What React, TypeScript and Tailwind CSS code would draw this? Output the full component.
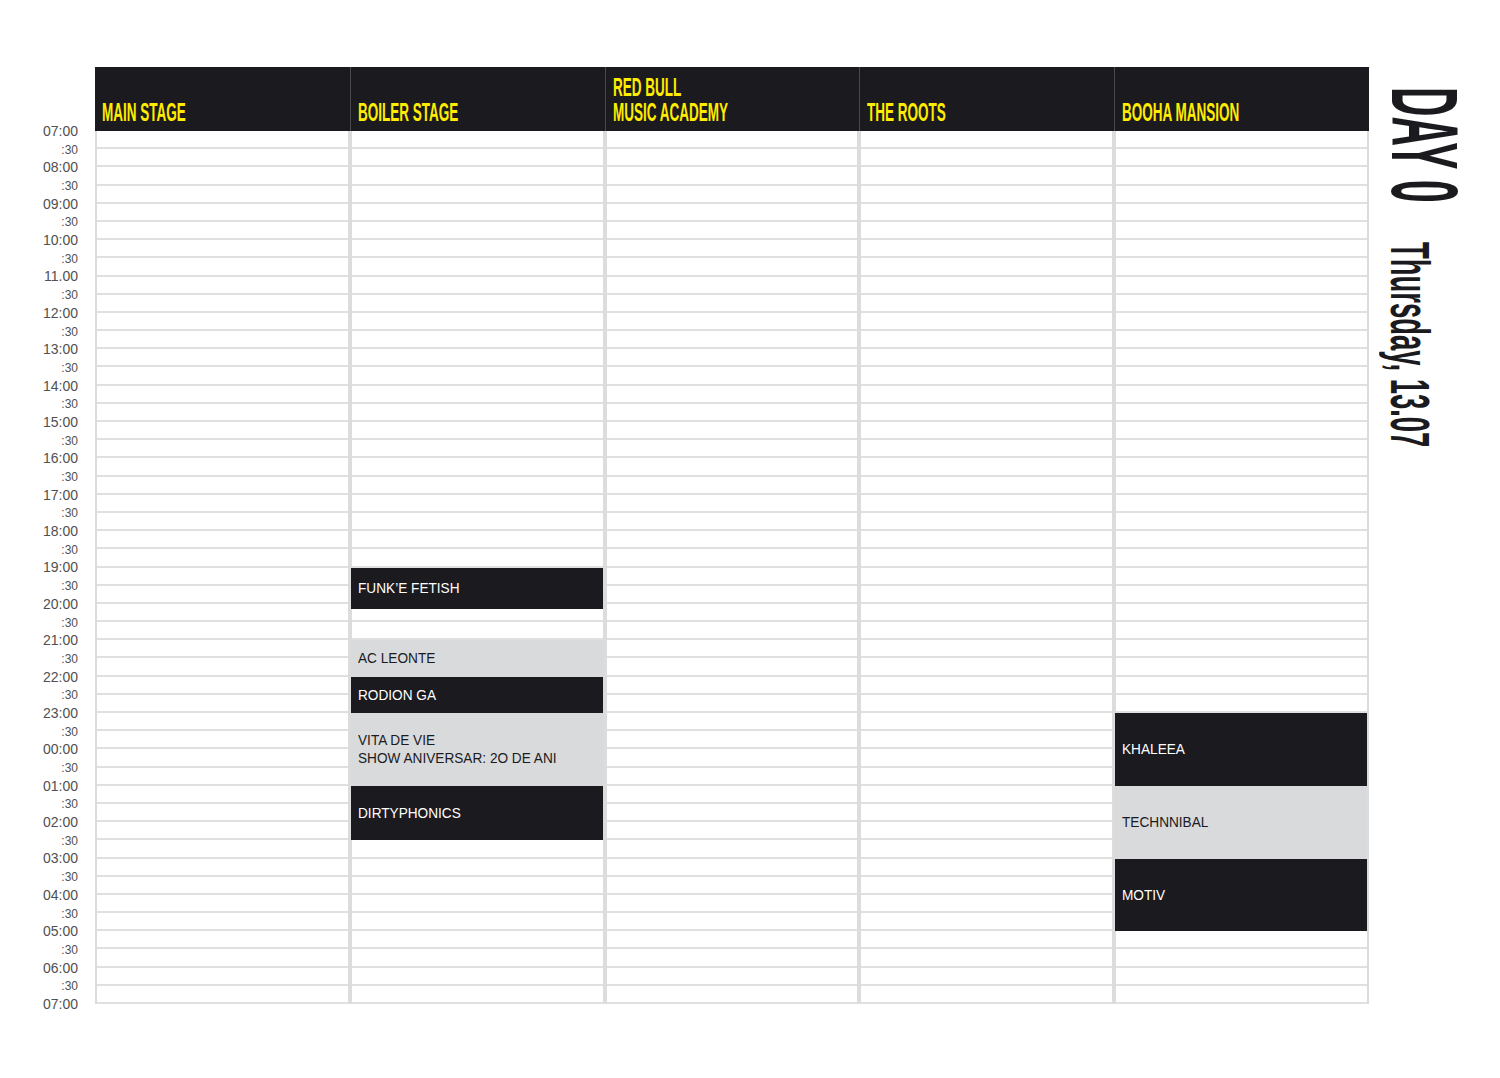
import React from 'react';

type Slot = { name: string[]; from: number; to: number; dark: boolean };

const ROW = 18.1875;

const stages: { title: string[]; slots: Slot[] }[] = [
  { title: ['MAIN STAGE'], slots: [] },
  {
    title: ['BOILER STAGE'],
    slots: [
      { name: ['FUNK’E FETISH'], from: 24, to: 26.3, dark: true },
      { name: ['AC LEONTE'], from: 28, to: 30, dark: false },
      { name: ['RODION GA'], from: 30, to: 32, dark: true },
      { name: ['VITA DE VIE', 'SHOW ANIVERSAR: 2O DE ANI'], from: 32, to: 36, dark: false },
      { name: ['DIRTYPHONICS'], from: 36, to: 39, dark: true },
    ],
  },
  { title: ['RED BULL', 'MUSIC ACADEMY'], slots: [] },
  { title: ['THE ROOTS'], slots: [] },
  {
    title: ['BOOHA MANSION'],
    slots: [
      { name: ['KHALEEA'], from: 32, to: 36, dark: true },
      { name: ['TECHNNIBAL'], from: 36, to: 40, dark: false },
      { name: ['MOTIV'], from: 40, to: 44, dark: true },
    ],
  },
];

const times: string[] = [];
for (let i = 0; i <= 48; i++) {
  const h = (7 + Math.floor(i / 2)) % 24;
  times.push(i % 2 ? ':30' : `${String(h).padStart(2, '0')}:00`);
}
// the print uses a dot for 11 o'clock
times[8] = '11.00';

export default function App() {
  return (
    <div className="w-[1500px] h-[1078px] bg-white flex pt-[67px] font-['Liberation_Sans',Arial,sans-serif]">
      <div className="w-[95px] shrink-0 flex flex-col pt-[55.4px] pr-[17px]">
        {times.map((t, i) => (
          <div
            key={i}
            className={`h-[18.1875px] flex items-center justify-end text-[#505050] ${i % 2 ? 'text-[12px]' : 'text-[14px]'}`}
          >
            {t}
          </div>
        ))}
      </div>

      <div className="w-[1274px] shrink-0 flex">
        {stages.map((s, ci) => (
          <div key={ci} className="flex-1 flex flex-col">
            <div className={`h-[64px] bg-[#1b1a1e] flex items-end pl-[7px] pb-[6px] ${ci ? 'border-l border-[#4a494d]' : ''}`}>
              <div className="origin-bottom-left scale-x-[0.54] whitespace-nowrap font-bold text-[25px] leading-[25px] text-[#ffec00]">
                {s.title.map((l) => (
                  <div key={l}>{l}</div>
                ))}
              </div>
            </div>
            <div className="relative h-[873px] grid grid-rows-[repeat(48,minmax(0,1fr))] border-l-2 border-[#dcdcdc] last:border-r-2">
              {Array.from({ length: 48 }).map((_, r) => (
                <div key={r} className="border-b-2 border-[#e0e0e0]" />
              ))}
              {s.slots.map((e) => (
                <div
                  key={e.name[0]}
                  className={`absolute -left-[1px] right-0 flex items-center pl-[7px] ${e.dark ? 'bg-[#1b1a1e] text-white' : 'bg-[#d9dadc] text-[#1b1a1e]'}`}
                  style={{ top: e.from * ROW, height: (e.to - e.from) * ROW }}
                >
                  <div className="origin-left scale-x-[0.88] whitespace-nowrap text-[15.5px] leading-[18px]">
                    {e.name.map((l) => (
                      <div key={l}>{l}</div>
                    ))}
                  </div>
                </div>
              ))}
            </div>
          </div>
        ))}
      </div>

      <div className="flex-1 flex flex-col pt-[20px] pl-[21px] text-[#1b1a1e]">
        <div className="h-[155px]">
          <div className="[writing-mode:vertical-rl] origin-top scale-y-[0.43] font-bold text-[95px] leading-[70px] whitespace-nowrap">
            DAY 0
          </div>
        </div>
        <div className="-ml-[5px]">
          <div className="[writing-mode:vertical-rl] origin-top scale-y-[0.49] font-bold text-[56px] leading-[50px] whitespace-nowrap">
            Thursday, 13.07
          </div>
        </div>
      </div>
    </div>
  );
}
